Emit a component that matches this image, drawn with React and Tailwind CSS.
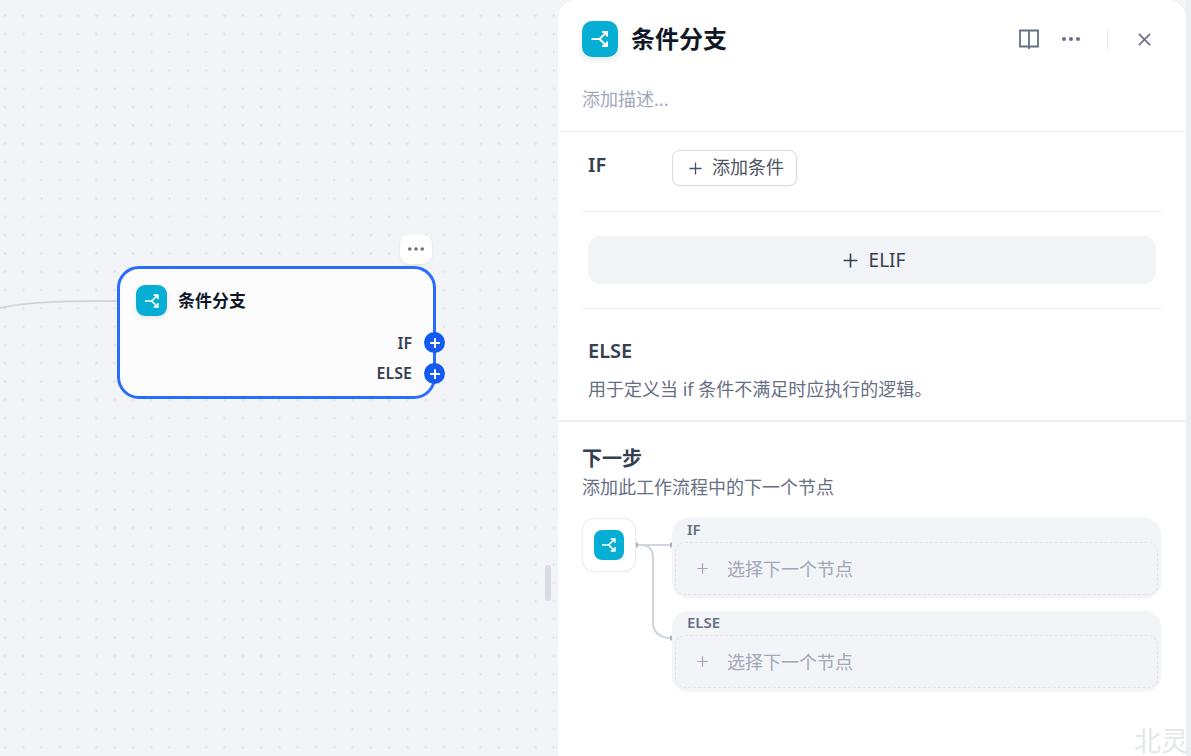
function Branch({ className }) {
  return (
    <svg viewBox="0 0 24 24" fill="none" stroke="white" strokeWidth="2" className={className}>
      <path d="M3.5 12H11.5L18 5.8" />
      <path d="M11.5 12L18 18.2" />
      <path d="M14 5H19V9.5" />
      <path d="M14 19H19V14.5" />
    </svg>
  );
}
function Dots({ className }) {
  return (
    <svg viewBox="0 0 18 4" className={className} fill="currentColor">
      <circle cx="2" cy="2" r="2" /><circle cx="9" cy="2" r="2" /><circle cx="16" cy="2" r="2" />
    </svg>
  );
}
function Plus({ className, w = 2 }) {
  return (
    <svg viewBox="0 0 16 16" fill="none" stroke="currentColor" strokeWidth={w} className={className}>
      <path d="M8 1.5V14.5M1.5 8H14.5" />
    </svg>
  );
}
function Handle({ className }) {
  return (
    <div className={"absolute left-[304px] w-[21px] h-[21px] rounded-full bg-[#155aef] flex items-center justify-center text-white " + className}>
      <Plus className="w-[12px] h-[12px]" w={2.6} />
    </div>
  );
}
function BranchCard({ label }) {
  return (
    <div className="w-[489px] h-[80px] rounded-[16px] bg-[#f2f4f7] shadow-[0_1px_2px_rgba(16,24,40,0.03)] pl-[3px] pr-[3px] flex flex-col">
      <div className="h-[24px] pl-[12px] pb-[2px] flex items-center text-[15px] leading-[22px] font-semibold text-[#676f83]">{label}</div>
      <div className="h-[53px] border border-dashed border-[#e0e3e8] rounded-[10px] flex items-center pl-[20px] text-[#a0a8b8]">
        <Plus className="w-[13px] h-[13px]" w={1.5} />
        <span className="ml-[18px] text-[18px] leading-[24px]">选择下一个节点</span>
      </div>
    </div>
  );
}
export default function App() {
  return (
    <div className="relative flex w-[1191px] h-[756px] overflow-hidden bg-[#f2f4f7] text-[#354052] font-['Noto_Sans','Noto_Sans_CJK_SC',sans-serif]">
      <div className="relative w-[558px] h-full bg-[radial-gradient(#e3e5ea_1px,transparent_1.6px)] bg-[length:18.3px_18.3px] bg-[position:-4.2px_6.4px]">
        <svg className="absolute left-0 top-[295px] w-[120px] h-[20px]" viewBox="0 0 120 20" fill="none">
          <path d="M0 13C30 6 70 6 120 6" stroke="#d0d5dd" strokeWidth="2" />
        </svg>
        <div className="absolute left-[400px] top-[234px] w-[32px] h-[30px] rounded-[10px] bg-white shadow-[0_1px_3px_rgba(16,24,40,0.08)] flex items-center justify-center text-[#676f83]">
          <Dots className="w-[16px] h-[4px]" />
        </div>
        <div className="absolute left-[117px] top-[266px] w-[319px] h-[133px] rounded-[22px] border-[3px] border-[#296dff] bg-[#fcfcfd]">
          <div className="absolute left-[16px] top-[16px] w-[31px] h-[31px] rounded-[9px] bg-[#06aed4] shadow-[0_2px_4px_rgba(16,24,40,0.1)] flex items-center justify-center">
            <Branch className="w-[20px] h-[20px]" />
          </div>
          <div className="absolute left-[58px] top-[20px] text-[17px] leading-[24px] font-bold text-[#101828]">条件分支</div>
          <div className="absolute right-[21px] top-[63px] text-[16px] leading-[22px] font-semibold text-[#354052]">IF</div>
          <div className="absolute right-[21px] top-[93px] text-[16px] leading-[22px] font-semibold text-[#354052]">ELSE</div>
          <Handle className="top-[63px]" />
          <Handle className="top-[94px]" />
        </div>
        <div className="absolute right-[7px] top-[565px] w-[6px] h-[36px] rounded-full bg-[#d9dce2]" />
      </div>
      <div className="w-[628px] h-full bg-white rounded-t-[18px] shadow-[0_0_2px_rgba(16,24,40,0.06)] flex flex-col">
        <div className="h-[132px] border-b border-[#eef0f3] px-[24px] shrink-0">
          <div className="h-[78px] flex items-center">
            <div className="w-[36px] h-[36px] rounded-[10px] bg-[#06aed4] shadow-[0_3px_6px_rgba(16,24,40,0.1)] flex items-center justify-center">
              <Branch className="w-[24px] h-[24px]" />
            </div>
            <div className="ml-[13px] text-[24px] leading-[32px] font-bold text-[#101828]">条件分支</div>
            <div className="ml-auto flex items-center text-[#676f83]">
              <svg viewBox="0 0 20 20" fill="none" stroke="currentColor" strokeWidth="1.8" className="w-[20px] h-[20px]">
                <path d="M1 1.5H19V17.5H1ZM10 1.5V20" />
              </svg>
              <Dots className="ml-[23px] w-[18px] h-[4px]" />
              <div className="ml-[27px] w-px h-[20px] bg-[#e6e8ec]" />
              <svg viewBox="0 0 14 14" fill="none" stroke="currentColor" strokeWidth="1.7" className="ml-[30px] mr-[11px] w-[13px] h-[13px]">
                <path d="M1 1L13 13M13 1L1 13" />
              </svg>
            </div>
          </div>
          <div className="text-[18px] leading-[24px] mt-[9px] text-[#a0a8b8]">添加描述...</div>
        </div>
        <div className="mx-[24px] h-[80px] border-b border-[#eef0f3] px-[6px] flex items-start shrink-0">
          <div className="w-[84px] pt-[19px] text-[20px] leading-[28px] font-semibold text-[#354052]">IF</div>
          <div className="mt-[18px] w-[125px] h-[36px] rounded-[8px] border border-[#d8dbe0] bg-white shadow-[0_1px_2px_rgba(16,24,40,0.04)] flex items-center pl-[15px] pb-[2px] text-[#495464]">
            <Plus className="w-[15px] h-[15px] mt-[2px]" w={1.4} />
            <span className="ml-[9px] text-[18px] leading-[24px]">添加条件</span>
          </div>
        </div>
        <div className="mx-[24px] h-[97px] border-b border-[#eef0f3] px-[6px] flex items-center shrink-0">
          <div className="w-full h-[48px] rounded-[12px] bg-[#f2f4f7] pl-[3px] flex items-center justify-center text-[#354052]">
            <Plus className="w-[17px] h-[17px]" w={1.5} />
            <span className="ml-[10px] text-[19px] leading-[24px]">ELIF</span>
          </div>
        </div>
        <div className="h-[113px] border-b-2 border-[#eef0f3] px-[30px] pt-[28px] shrink-0">
          <div className="text-[20px] leading-[28px] font-semibold text-[#354052]">ELSE</div>
          <div className="mt-[12px] text-[18px] leading-[24px] text-[#676f83]">用于定义当 if 条件不满足时应执行的逻辑。</div>
        </div>
        <div className="px-[24px] pt-[23px]">
          <div className="text-[20px] leading-[28px] font-bold text-[#354052]">下一步</div>
          <div className="text-[18px] leading-[24px] mt-[2px] text-[#676f83]">添加此工作流程中的下一个节点</div>
          <div className="mt-[19px] flex items-start">
            <div className="relative w-[54px] h-[54px] rounded-[12px] border border-[#e9ebef] bg-white shadow-[0_1px_2px_rgba(16,24,40,0.03)] flex items-center justify-center">
              <div className="w-[30px] h-[30px] rounded-[8px] bg-[#06aed4] flex items-center justify-center">
                <Branch className="w-[20px] h-[20px]" />
              </div>
            </div>
            <svg className="w-[36px] h-[130px] shrink-0" viewBox="0 0 36 130" fill="none" stroke="#d0d5dd" strokeWidth="2">
              <path d="M1 27H35" />
              <path d="M1 27H5C13 27 17 32 17 40V105C17 114 24 120 35 120" />
              <path d="M1 24.5V29.5M35 24.5V29.5M35 117.5V122.5" stroke="#98a2b2" strokeWidth="1.5" />
            </svg>
            <div className="flex flex-col gap-[13px]">
              <BranchCard label="IF" />
              <BranchCard label="ELSE" />
            </div>
          </div>
        </div>
      </div>
      <div className="absolute left-[1134px] top-[726px] text-[27px] leading-[30px] text-[#e4e6ea]">北灵</div>
      <div className="w-[5px] h-full bg-[#eceef2]" />
    </div>
  );
}
